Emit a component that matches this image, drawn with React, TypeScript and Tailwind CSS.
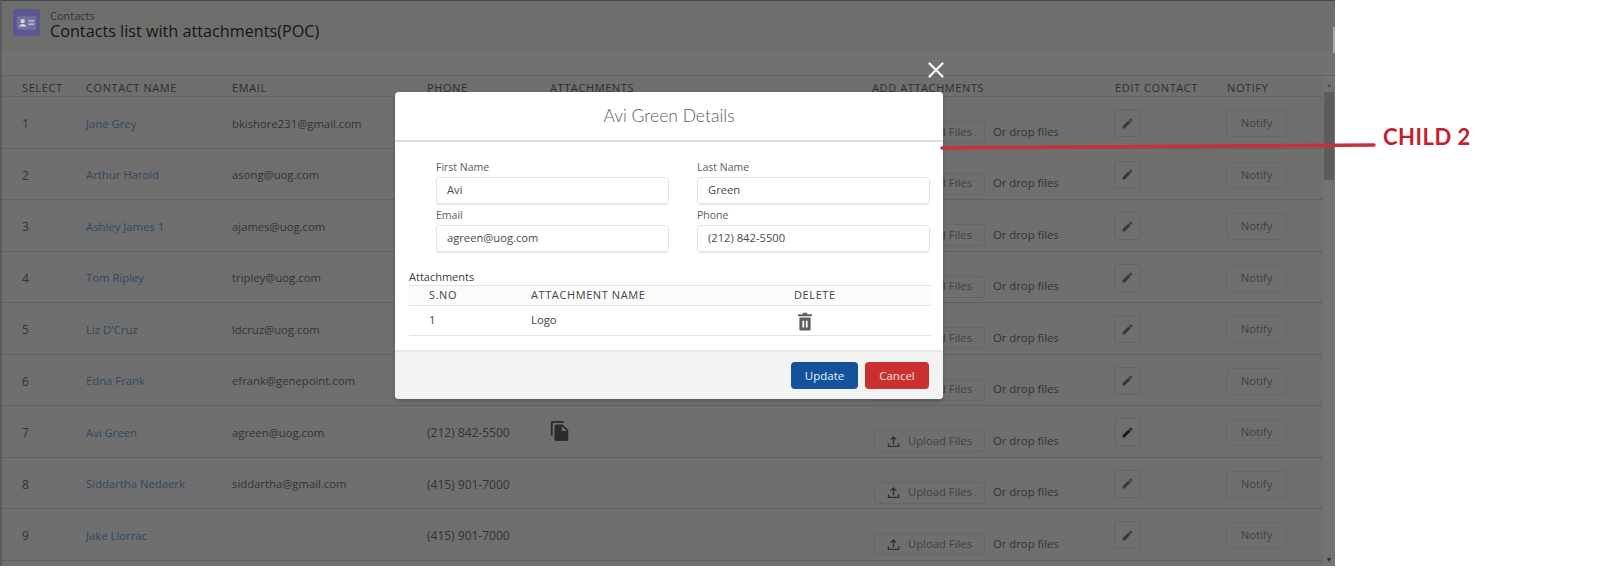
import React from 'react';
import { X } from 'lucide-react';
import { MdEdit, MdFileCopy } from 'react-icons/md';

const contacts = [
  { id: 1, name: 'Jane Grey', email: 'bkishore231@gmail.com', phone: '' },
  { id: 2, name: 'Arthur Harold', email: 'asong@uog.com', phone: '' },
  { id: 3, name: 'Ashley James 1', email: 'ajames@uog.com', phone: '' },
  { id: 4, name: 'Tom Ripley', email: 'tripley@uog.com', phone: '' },
  { id: 5, name: "Liz D'Cruz", email: 'ldcruz@uog.com', phone: '' },
  { id: 6, name: 'Edna Frank', email: 'efrank@genepoint.com', phone: '' },
  { id: 7, name: 'Avi Green', email: 'agreen@uog.com', phone: '(212) 842-5500', file: true },
  { id: 8, name: 'Siddartha Nedaerk', email: 'siddartha@gmail.com', phone: '(415) 901-7000' },
  { id: 9, name: 'Jake Llorrac', email: '', phone: '(415) 901-7000' },
];

const gridCols = 'grid grid-cols-[64px_146px_195px_123px_322px_243px_112px_95px] pl-[22px] items-center';

const UploadIcon = () => (
  <svg viewBox="0 0 14 14" className="w-[13px] h-[13px] text-[#2f2f2f]" fill="none" stroke="currentColor" strokeWidth="1.4">
    <path d="M7 10V2M4 5l3-3 3 3M1.5 9v3.2h11V9" />
  </svg>
);

const TrashIcon = () => (
  <svg viewBox="0 0 18 22" className="w-[16px] h-[19px] text-[#5f5f5f]" fill="currentColor">
    <path d="M6.5 2.5V1h5v1.5H17V5H1V2.5z" />
    <path fillRule="evenodd" d="M2.5 6.5h13V20a1.5 1.5 0 0 1-1.5 1.5H4A1.5 1.5 0 0 1 2.5 20zM6 10v8h2v-8zm4 0v8h2v-8z" />
  </svg>
);

const ContactIcon = () => (
  <div className="w-[27px] h-[27px] rounded-[3px] bg-[#5b5790] flex items-center justify-center">
    <svg viewBox="0 0 20 14" className="w-[19px] h-[14px]" fill="#a3a0b8">
      <path fillRule="evenodd" d="M1.5 0h17A1.5 1.5 0 0 1 20 1.5v11a1.5 1.5 0 0 1-1.5 1.5h-17A1.5 1.5 0 0 1 0 12.500v-11A1.500 1.500 0 0 1 1.500 0z" fillOpacity="0.35" />
      <circle cx="6" cy="5" r="2.300" fill="#d0cfdb" />
      <path d="M2.500 11c0-2 1.500-3 3.500-3s3.500 1 3.500 3z" fill="#d0cfdb" />
      <path d="M12 4h6v1.400h-6zM12 7.500h6v1.400h-6z" fill="#d0cfdb" />
    </svg>
  </div>
);

const Field = ({ label, value }: { label: string; value: string }) => (
  <div className="flex flex-col">
    <label className="text-[10.500px] leading-[18px] mb-[1px] text-[#5c5c5c]">{label}</label>
    <div className="h-[27px] border border-[#e4e4e4] rounded-[3px] shadow-[0_1px_1px_#e8e8e8] flex items-center px-[10px] text-[11.200px] text-[#4a4a4a]">
      {value}
    </div>
  </div>
);

const Row = ({ c }: { c: (typeof contacts)[number] }) => (
  <div className={`${gridCols} h-[51.500px] shrink-0 pt-[4px] border-b border-[#606060] text-[11.300px] text-[#333333]`}>
    <span className="text-[12px]">{c.id}</span>
    <span className="text-[#31495f]">{c.name}</span>
    <span>{c.email}</span>
    <span className="text-[12px]">{c.phone}</span>
    <span>{c.file && <MdFileCopy className="w-[22px] h-[22px] text-[#2b2b2b] -ml-[1px] -mt-[4px]" />}</span>
    <div className="flex items-center pt-[16px] ml-[2px]">
      <div className="w-[111px] h-[22px] flex items-center justify-center gap-[8px] border border-[#666666] rounded-[3px] text-[#424242]">
        <UploadIcon />
        <span>Upload Files</span>
      </div>
      <span className="ml-[8px]">Or drop files</span>
    </div>
    <div className="w-[27px] h-[28px] -ml-[1px] -mt-[2px] flex items-center justify-center border border-[#656565] rounded-[3px]">
      <MdEdit className={`w-[13px] h-[13px] ${c.id === 7 ? 'text-[#1c1c1c]' : 'text-[#383838]'}`} />
    </div>
    <div className="w-[61px] h-[27px] -ml-[1px] -mt-[1px] flex items-center justify-center border border-[#676767] rounded-[3px] text-[#414141]">
      Notify
    </div>
  </div>
);

export default function App() {
  return (
    <div className="relative w-[1600px] h-[573px] bg-white overflow-hidden font-['Open_Sans',sans-serif]">
      <div className="w-[1335px] h-[566px] flex flex-col bg-[#6f6f6f] border-l-2 border-t border-l-[#5a5d60] border-t-[#3f4658]">
        <header className="h-[49px] shrink-0 flex items-start gap-[10px] pl-[11px] pt-[8px] bg-[#6e6f6d] border-b border-[#696b67]">
          <ContactIcon />
          <div className="flex flex-col mt-[1px]">
            <span className="text-[11px] leading-[12px] text-[#333333]">Contacts</span>
            <span className="text-[16.200px] leading-[18px] font-medium text-[#151515]">Contacts list with attachments(POC)</span>
          </div>
        </header>
        <div className="h-[26px] shrink-0 bg-[#717172] border-b border-[#636363]" />
        <div className="flex-1 flex min-h-0">
          <div className="flex-1 flex flex-col min-w-0 overflow-hidden">
            <div className={`${gridCols} h-[21px] shrink-0 pt-[4px] border-b border-[#636363] text-[11px] tracking-[0.6px] text-[#2e2e2e] -ml-[2px]`}>
              <span>SELECT</span>
              <span>CONTACT NAME</span>
              <span>EMAIL</span>
              <span>PHONE</span>
              <span>ATTACHMENTS</span>
              <span>ADD ATTACHMENTS</span>
              <span>EDIT CONTACT</span>
              <span>NOTIFY</span>
            </div>
            <div className="-ml-[2px] flex flex-col">
              {contacts.map((c) => (
                <Row key={c.id} c={c} />
              ))}
            </div>
          </div>
          <div className="w-[12px] shrink-0 flex flex-col items-center bg-[#737373]">
            <span className="h-[16px] text-[6px] leading-[18px] text-[#4a4a4a]">▲</span>
            <div className="w-[10px] h-[88px] bg-[#5c5c5c]" />
            <span className="mt-auto h-[12px] text-[7px] leading-[12px] text-[#2e2e2e]">▼</span>
          </div>
        </div>
      </div>

      <div className="absolute left-[1333px] top-[27px] w-[2px] h-[26px] bg-[#a8a8a8]" />

      <X className="absolute left-[923px] top-[57px] w-[26px] h-[26px] text-white" strokeWidth={2} />

      <div className="absolute left-[395px] top-[92px] w-[548px] h-[307px] bg-white rounded-[4px] flex flex-col overflow-hidden shadow-[0_2px_4px_rgba(0,0,0,0.2)]">
        <div className="h-[50px] shrink-0 flex items-center justify-center border-b-2 border-[#dddddd] font-['Lato',sans-serif] font-light text-[17.500px] text-[#5c5c5c]">
          Avi Green Details
        </div>
        <div className="flex-1 pt-[16px] px-[14px]">
          <div className="grid grid-cols-[233px_233px] gap-x-[28px] gap-y-[2px] pl-[27px]">
            <Field label="First Name" value="Avi" />
            <Field label="Last Name" value="Green" />
            <Field label="Email" value="agreen@uog.com" />
            <Field label="Phone" value="(212) 842-5500" />
          </div>
          <div className="mt-[17px] text-[11px] leading-[16px] text-[#3c3c3c]">Attachments</div>
          <div className="w-[522px] border-t border-[#e2e2e2]">
            <div className="h-[20px] grid grid-cols-[20px_102px_263px_1fr] items-center border-b border-[#e2e2e2] bg-[#fbfbfb] text-[11px] tracking-[0.6px] text-[#444444]">
              <span />
              <span>S.NO</span>
              <span>ATTACHMENT NAME</span>
              <span>DELETE</span>
            </div>
            <div className="h-[30px] grid grid-cols-[20px_102px_263px_1fr] items-center border-b border-[#e2e2e2] text-[11.300px] text-[#444444]">
              <span />
              <span>1</span>
              <span>Logo</span>
              <span className="pl-[3px] pt-[2px]">
                <TrashIcon />
              </span>
            </div>
          </div>
        </div>
        <div className="h-[49px] shrink-0 flex items-center justify-end gap-[7px] pr-[14px] bg-[#f3f3f3] border-t-2 border-[#e8e8e8]">
          <button className="w-[67px] h-[27px] rounded-[4px] bg-[#14529b] text-[11.500px] font-medium text-[#e8f1fa]">Update</button>
          <button className="w-[64px] h-[27px] rounded-[4px] bg-[#c9302f] text-[11.500px] font-medium text-[#f8e6e6]">Cancel</button>
        </div>
      </div>

      <svg className="absolute left-[938px] top-[138px] w-[440px] h-[16px]" viewBox="0 0 440 16" fill="none">
        <path d="M4 10 C100 9 200 9 280 8 L436 7" stroke="#c8303a" strokeWidth="3.500" strokeLinecap="round" />
      </svg>
      <span className="absolute left-[1383px] top-[123px] text-[22px] tracking-[0.5px] leading-[28px] font-bold font-['Lato',sans-serif] text-[#c21f30]">CHILD 2</span>
    </div>
  );
}
